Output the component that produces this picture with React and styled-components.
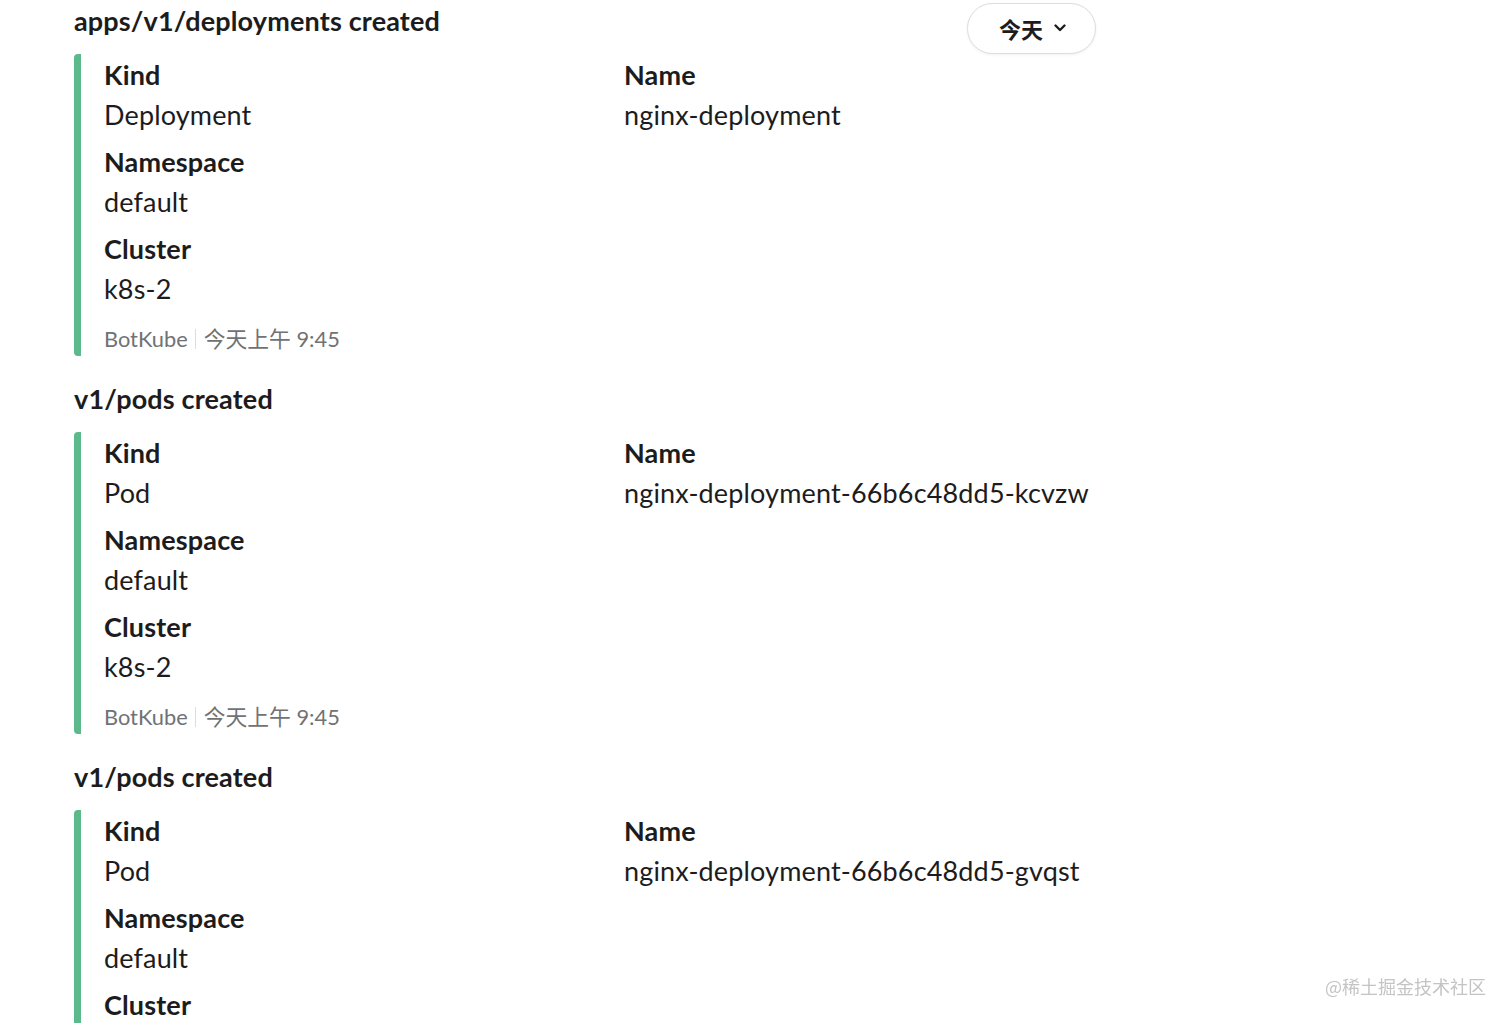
import styled, { createGlobalStyle } from "styled-components";

const messages = [
  {
    id: 1,
    title: "apps/v1/deployments created",
    kind: "Deployment",
    name: "nginx-deployment",
    namespace: "default",
    cluster: "k8s-2",
  },
  {
    id: 2,
    title: "v1/pods created",
    kind: "Pod",
    name: "nginx-deployment-66b6c48dd5-kcvzw",
    namespace: "default",
    cluster: "k8s-2",
  },
  {
    id: 3,
    title: "v1/pods created",
    kind: "Pod",
    name: "nginx-deployment-66b6c48dd5-gvqst",
    namespace: "default",
    cluster: "k8s-2",
  },
];

const GlobalStyle = createGlobalStyle`
  html, body {
    margin: 0;
    padding: 0;
    background: #ffffff;
    overflow: hidden;
  }
  body {
    font-family: Lato, "Noto Sans CJK SC", sans-serif;
    color: #1d1c1d;
  }
`;

export default function App() {
  return (
    <>
      <GlobalStyle />
      <Page>
        {messages.map((m) => (
          <Message key={m.id} msg={m} />
        ))}
        <DayPill>
          今天
          <svg width="16" height="16" viewBox="0 0 16 16" fill="none">
            <path
              d="M3.5 5.5 L8 10 L12.5 5.5"
              stroke="#1d1c1d"
              strokeWidth="2.4"
              strokeLinecap="round"
              strokeLinejoin="round"
            />
          </svg>
        </DayPill>
      </Page>
      <Watermark>@稀土掘金技术社区</Watermark>
    </>
  );
}

function Message({ msg }) {
  return (
    <Block>
      <Title>{msg.title}</Title>
      <Attachment>
        <Fields>
          <Field>
            <Label>Kind</Label>
            <Value>{msg.kind}</Value>
          </Field>
          <Field>
            <Label>Name</Label>
            <Value>{msg.name}</Value>
          </Field>
          <Field $wide>
            <Label>Namespace</Label>
            <Value>{msg.namespace}</Value>
          </Field>
          <Field $wide>
            <Label>Cluster</Label>
            <Value>{msg.cluster}</Value>
          </Field>
        </Fields>
        <Footer>
          <span>BotKube</span>
          <Sep />
          <span>今天上午 9:45</span>
        </Footer>
      </Attachment>
    </Block>
  );
}

const Page = styled.div`
  position: relative;
  padding: 1px 0 0 74px;
  width: 1100px;
`;

const Block = styled.div`
  display: flex;
  flex-direction: column;
  margin-bottom: 23px;
`;

const Title = styled.div`
  font-size: 27px;
  letter-spacing: 0.15px;
  font-weight: 700;
  line-height: 40px;
  margin-bottom: 13px;
`;

const Attachment = styled.div`
  border-left: 7px solid #5bb98b;
  border-radius: 4px;
  padding: 1px 0 2px 23px;
  display: flex;
  flex-direction: column;
`;

const Fields = styled.div`
  display: grid;
  grid-template-columns: 520px 1fr;
  row-gap: 7px;
`;

const Field = styled.div`
  grid-column: ${(p) => (p.$wide ? "1 / span 2" : "auto")};
  display: flex;
  flex-direction: column;
`;

const Label = styled.div`
  font-size: 27px;
  letter-spacing: 0.15px;
  font-weight: 700;
  line-height: 40px;
`;

const Value = styled.div`
  font-size: 27px;
  letter-spacing: 0.15px;
  font-weight: 400;
  line-height: 40px;
`;

const Footer = styled.div`
  margin-top: 15px;
  display: flex;
  align-items: center;
  font-size: 21.8px;
  line-height: 30px;
  color: #717274;
`;

const Sep = styled.span`
  display: inline-block;
  width: 1px;
  height: 20px;
  background: #dddddd;
  margin: 0 8px 0 7px;
`;

const DayPill = styled.div`
  position: absolute;
  top: 3px;
  left: 967px;
  width: 129px;
  height: 51px;
  box-sizing: border-box;
  border: 1px solid #dddddd;
  border-radius: 26px;
  background: #ffffff;
  box-shadow: 0 1px 3px rgba(0, 0, 0, 0.06);
  display: flex;
  align-items: center;
  justify-content: center;
  gap: 9px;
  font-size: 22px;
  font-weight: 700;
  padding: 0 0 2px 4px;
`;

const Watermark = styled.div`
  position: fixed;
  right: 26px;
  top: 973px;
  font-size: 18px;
  line-height: 26px;
  color: #c4c4c4;
  font-family: "Noto Sans CJK SC", sans-serif;
`;
